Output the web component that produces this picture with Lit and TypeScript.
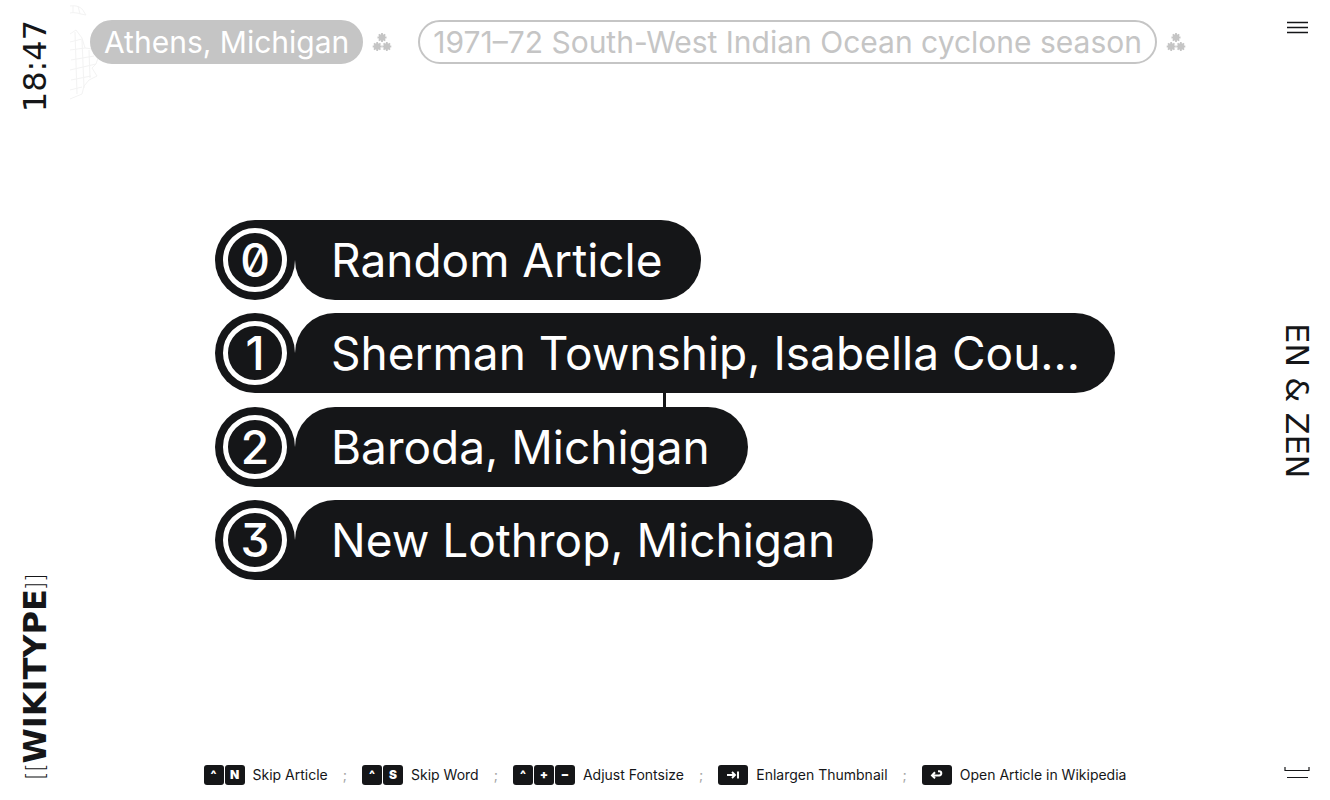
import { LitElement, html, css, svg } from "lit";
import { customElement } from "lit/decorators.js";

interface Hint {
  keys: string[];
  wide?: boolean;
  label: string;
}

const TRAIL = [
  { title: "Athens, Michigan", current: true },
  { title: "1971–72 South-West Indian Ocean cyclone season", current: false },
];

const CHOICES = [
  "Random Article",
  "Sherman Township, Isabella County, Michigan",
  "Baroda, Michigan",
  "New Lothrop, Michigan",
];

const MAX_TITLE = 30;

const shorten = (title: string) =>
  title.length > MAX_TITLE ? title.slice(0, MAX_TITLE) + "…" : title;

const HINTS: Hint[] = [
  { keys: ["^", "N"], label: "Skip Article" },
  { keys: ["^", "S"], label: "Skip Word" },
  { keys: ["^", "+", "−"], label: "Adjust Fontsize" },
  { keys: ["tab"], wide: true, label: "Enlargen Thumbnail" },
  { keys: ["enter"], wide: true, label: "Open Article in Wikipedia" },
];

const tabIcon = html`<svg width="12" height="8" viewBox="0 0 12 8" fill="none" stroke="currentColor" stroke-width="1.9">
  <path d="M0 4h8M5 1l3 3-3 3M11 .5v7" />
</svg>`;

const enterIcon = html`<svg width="13" height="10" viewBox="0 0 13 10" fill="none" stroke="currentColor" stroke-width="2">
  <path d="M5 2.2L2 5.4l3 3M2 5.4h7.2a2.1 2.1 0 0 0 0-4.2H8" />
</svg>`;

const star = (x: number, y: number) => svg`<g transform="translate(${x} ${y})">
  <circle r="3.2" fill="currentColor" />
  <path d="M0-4.5V4.5M-4.5 0H4.5M-3.2-3.2L3.2 3.2M-3.2 3.2L3.2-3.2" stroke="currentColor" stroke-width="1.8" />
</g>`;

@customElement("app-root")
export class AppRoot extends LitElement {
  static styles = css`
    :host {
      display: grid;
      grid-template-columns: 70px minmax(0, 1fr) 70px;
      min-height: 100vh;
      box-sizing: border-box;
      position: relative;
      background: #fff;
      color: #151618;
      font-family: Inter, "Liberation Sans", sans-serif;
      font-feature-settings: "zero", "cv09";
    }
    button {
      font: inherit;
      font-feature-settings: inherit;
      color: inherit;
      background: none;
      border: 0;
      padding: 0;
      cursor: pointer;
    }
    a {
      color: inherit;
      text-decoration: none;
    }
    .rail {
      display: flex;
      flex-direction: column;
      justify-content: space-between;
      align-items: center;
      padding: 20px 0;
      box-sizing: border-box;
      font-family: "DejaVu Sans", sans-serif;
      font-size: 32px;
      line-height: 36px;
    }
    .right {
      padding-left: 4px;
    }
    .up {
      writing-mode: vertical-rl;
      transform: rotate(180deg);
    }
    .down {
      writing-mode: vertical-rl;
    }
    .logo {
      font-weight: 700;
      display: flex;
      align-items: center;
    }
    .bracket {
      font-family: Inter, sans-serif;
      font-weight: 200;
      font-size: 25px;
    }
    .line-icon {
      display: block;
    }
    .center {
      display: grid;
      grid-template-rows: 110px 1fr 110px;
    }
    .map {
      position: absolute;
      left: 70px;
      top: 0;
      color: #f3f3f3;
    }
    .trail {
      position: relative;
      display: flex;
      align-items: flex-start;
      gap: 26px;
      padding: 20px 20px 0;
      color: #c5c5c5;
    }
    .crumb {
      display: flex;
      align-items: center;
      gap: 9px;
    }
    .tag {
      box-sizing: border-box;
      height: 44px;
      border: 2px solid #c5c5c5;
      border-radius: 22px;
      padding: 0 13px;
      font-size: 30px;
      line-height: 40px;
      white-space: nowrap;
    }
    .filled {
      padding: 0 12px;
      background: #c5c5c5;
      color: #fff;
    }
    .choices {
      display: flex;
      flex-direction: column;
      justify-content: center;
      gap: 1vw;
      width: 100%;
      max-width: 900px;
      margin: 0 auto;
    }
    .choice {
      display: flex;
      align-self: flex-start;
      max-width: 100%;
      color: #fff;
      font-size: 46px;
      line-height: 80px;
      text-align: left;
    }
    .index {
      flex: none;
      box-sizing: border-box;
      width: 80px;
      height: 80px;
      padding: 8px;
      background: #151618;
      border-radius: 40px 40px 0 40px;
    }
    .ring {
      display: block;
      box-sizing: border-box;
      width: 64px;
      height: 64px;
      border: 5px solid #fff;
      border-radius: 50%;
      font-weight: 500;
      line-height: 54px;
      text-align: center;
    }
    .name {
      min-width: 0;
      white-space: nowrap;
      padding: 0 38px 0 36px;
      background: #151618;
      border-radius: 40px 40px 40px 0;
    }
    .first .index {
      border-radius: 40px 0 40px 40px;
    }
    .first .name {
      border-radius: 0 40px 40px 40px;
    }
    .hints {
      display: flex;
      justify-content: center;
      align-items: flex-end;
      gap: 15px;
      padding-bottom: 15px;
      font-size: 14px;
      line-height: 20px;
      white-space: nowrap;
    }
    .hint {
      display: flex;
      gap: 8px;
    }
    .keys {
      display: flex;
      gap: 1px;
    }
    .key {
      display: flex;
      align-items: center;
      justify-content: center;
      width: 20px;
      height: 20px;
      border-radius: 3px;
      background: #151618;
      color: #fff;
      font: inherit;
      font-size: 12px;
      font-weight: 900;
    }
    .wide {
      width: 30px;
    }
    .sep {
      color: #a5a5a5;
    }
    .stem {
      position: absolute;
      left: calc(50% - 2px);
      top: calc(50% - 8px);
      width: 3px;
      height: 16px;
      background: #151618;
    }
  `;

  private renderKey(key: string) {
    if (key === "tab") return tabIcon;
    if (key === "enter") return enterIcon;
    return key;
  }

  render() {
    return html`
      <aside class="rail">
        <time class="up">18:47</time>
        <a class="up logo" href="#"><span class="bracket">[[</span>WIKITYPE<span class="bracket">]]</span></a>
      </aside>
      <main class="center">
        <svg class="map" width="30" height="110" viewBox="0 0 30 110" fill="none" stroke="currentColor">
          <path d="M0 6c6-1 12 1 14 6l2 3-5-1c-4-1-7-2-11-1M3 6v7M8 6l2 8M0 34l6-4 6 8 3 10 8 1 5 9-2 6-4 4 5 8-8 4-5 6-2 8-12 5M0 42l12-3M0 50l15-2M1 60l23-4M0 70l26-6M1 80l20-4M0 90l12-3M5 32l2 62M12 40l2 48M19 50l1 28" />
        </svg>
        <nav class="trail">
          ${TRAIL.map(
            (t) => html`<div class="crumb">
              <a class="tag ${t.current ? "filled" : ""}" href="#">${t.title}</a>
              <svg width="20" height="20" viewBox="0 0 20 20">${star(10, 5.5)}${star(5.2, 14.5)}${star(14.8, 14.5)}</svg>
            </div>`
          )}
        </nav>
        <section class="choices">
          ${CHOICES.map(
            (c, i) => html`<button class="choice ${i === 0 ? "first" : ""}">
              <span class="index"><span class="ring">${i}</span></span><span class="name">${shorten(c)}</span>
            </button>`
          )}
        </section>
        <footer class="hints">
          ${HINTS.map(
            (h, i) => html`${i ? html`<span class="sep">;</span>` : ""}
              <span class="hint"
                ><span class="keys"
                  >${h.keys.map((k) => html`<kbd class="key ${h.wide ? "wide" : ""}">${this.renderKey(k)}</kbd>`)}</span
                >${h.label}</span
              >`
          )}
        </footer>
      </main>
      <aside class="rail right">
        <button aria-label="Menu">
          <svg class="line-icon" width="22" height="16" viewBox="0 0 22 16" stroke="currentColor" stroke-width="1.3">
            <path d="M1 2.5h21M1 7.5h21M1 12.5h21" />
          </svg>
        </button>
        <button class="down">EN &amp; ZEN</button>
        <button aria-label="Fold">
          <svg class="line-icon" width="26" height="14" viewBox="0 0 26 14" fill="none" stroke="currentColor" stroke-width="1.2">
            <path d="M1 1v3.5h24V1M3 11.5h21" />
          </svg>
        </button>
      </aside>
      <div class="stem"></div>
    `;
  }
}
